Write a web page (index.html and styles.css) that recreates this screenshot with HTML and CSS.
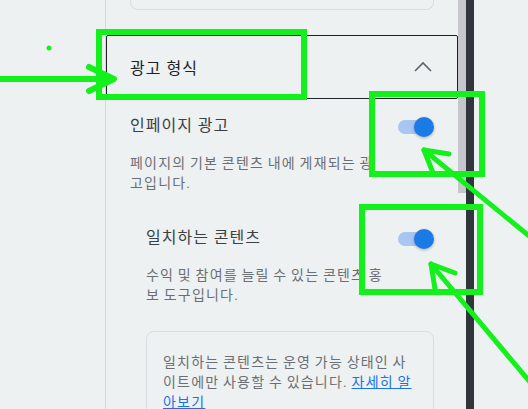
FILE: index.html
```html
<!DOCTYPE html>
<html lang="ko">
<head>
    <meta charset="UTF-8">
    <meta name="viewport" content="width=device-width, initial-scale=1.0">
    <title>광고 설정</title>
    <link rel="stylesheet" href="styles.css">
</head>
<body>
    <div class="page">
        <div class="side"></div>

        <div class="panel">
            <div class="card-end"></div>

            <div class="section-head">
                <span class="section-title">광고 형식</span>
                <svg class="chevron" width="20" height="20" viewBox="0 0 20 20">
                    <polyline points="2,14 10,6 18,14" fill="none" stroke="#5f6368" stroke-width="1.6"/>
                </svg>
            </div>

            <div class="setting">
                <div class="setting-text">
                    <div class="setting-name">인페이지 광고</div>
                    <p class="setting-desc">페이지의 기본 콘텐츠 내에 게재되는 광고입니다.</p>
                </div>
                <span class="toggle"></span>
            </div>

            <div class="setting sub">
                <div class="setting-text">
                    <div class="setting-name">일치하는 콘텐츠</div>
                    <p class="setting-desc">수익 및 참여를 늘릴 수 있는 콘텐츠 홍보 도구입니다.</p>
                </div>
                <span class="toggle"></span>
            </div>

            <div class="notice">
                일치하는 콘텐츠는 운영 가능 상태인 사이트에만 사용할 수 있습니다. <a href="#">자세히 알아보기</a>
            </div>
        </div>

        <div class="scroll"><div class="thumb"></div></div>
        <div class="edge"></div>
        <div class="rest"></div>
    </div>

    <!-- 주석 표시 -->
    <svg class="marks" width="528" height="409" viewBox="0 0 528 409">
        <g fill="none" stroke="#14f01c" stroke-width="6">
            <rect x="99" y="32" width="205" height="65"/>
            <rect x="372" y="94" width="110" height="80"/>
            <rect x="362" y="207" width="118" height="85"/>
        </g>
        <g fill="none" stroke="#14f01c" stroke-width="6" stroke-linecap="round" stroke-linejoin="round">
            <line x1="-5" y1="79" x2="112" y2="79"/>
            <polyline points="89,67 114,79 89,91"/>
        </g>
        <g fill="none" stroke="#14f01c" stroke-width="5" stroke-linecap="round" stroke-linejoin="round">
            <line x1="424" y1="150" x2="545" y2="249"/>
            <polyline points="449,154 424,150 433,173"/>
            <line x1="431" y1="264" x2="545" y2="400"/>
            <polyline points="455,273 431,264 435,289"/>
        </g>
        <circle cx="49" cy="48" r="2.5" fill="#14f01c"/>
    </svg>
</body>
</html>
```

FILE: styles.css
```css
* {
    margin: 0;
    padding: 0;
    box-sizing: border-box;
}

body {
    position: relative;
    height: 409px;
    overflow: hidden;
    background: #eef1f2;
    font-family: Roboto, "Noto Sans CJK KR", sans-serif;
}

.page {
    display: flex;
    height: 409px;
}

.side {
    width: 106px;
    flex: none;
    border-right: 1px solid #d6d9dc;
}

.panel {
    width: 352px;
    flex: none;
    padding: 0 24px;
}

.card-end {
    height: 10px;
    border: 1px solid #dadce0;
    border-top: none;
    border-radius: 0 0 8px 8px;
    margin-bottom: 25px;
}

.section-head {
    height: 64px;
    margin: 0 -24px;
    padding: 0 24px 0 23px;
    border: 1px solid #202124;
    border-radius: 2px;
    display: flex;
    align-items: center;
    justify-content: space-between;
}

.section-title {
    font-size: 16px;
    letter-spacing: 1px;
    color: #202124;
}

.chevron {
    display: block;
}

.setting {
    display: flex;
    gap: 13px;
    margin-top: 15px;
}

.setting.sub {
    padding-left: 16px;
    margin-top: 33px;
}

.setting-text {
    flex: 1;
    min-width: 0;
}

.setting-name {
    font-size: 16px;
    line-height: 24px;
    letter-spacing: 1px;
    color: #3c4043;
}

.setting-desc {
    margin-top: 15px;
    font-size: 14px;
    line-height: 20px;
    letter-spacing: 1.2px;
    word-spacing: -1px;
    color: #6b6f74;
}

.toggle {
    position: relative;
    width: 36px;
    height: 20px;
    flex: none;
    margin-top: 3px;
}

.toggle::before {
    content: '';
    position: absolute;
    left: 0;
    top: 3px;
    width: 34px;
    height: 14px;
    border-radius: 7px;
    background: #a8c6f2;
}

.toggle::after {
    content: '';
    position: absolute;
    right: 0;
    top: 0;
    width: 20px;
    height: 20px;
    border-radius: 50%;
    background: #1a7be6;
    box-shadow: 0 1px 3px rgba(0, 0, 0, 0.3);
}

.notice {
    margin: 26px 0 0 16px;
    padding: 20px 17px 16px 16px;
    border: 1px solid #dadce0;
    border-radius: 8px;
    font-size: 14px;
    line-height: 20px;
    letter-spacing: 1.2px;
    word-spacing: -1px;
    color: #6b6f74;
}

.notice a {
    color: #1a73e8;
}

.scroll {
    width: 8px;
    flex: none;
}

.thumb {
    height: 193px;
    background: #c6c7cc;
}

.edge {
    width: 8px;
    flex: none;
    background: #30353b;
}

.rest {
    flex: 1;
}

.marks {
    position: absolute;
    top: 0;
    left: 0;
    pointer-events: none;
}
```
